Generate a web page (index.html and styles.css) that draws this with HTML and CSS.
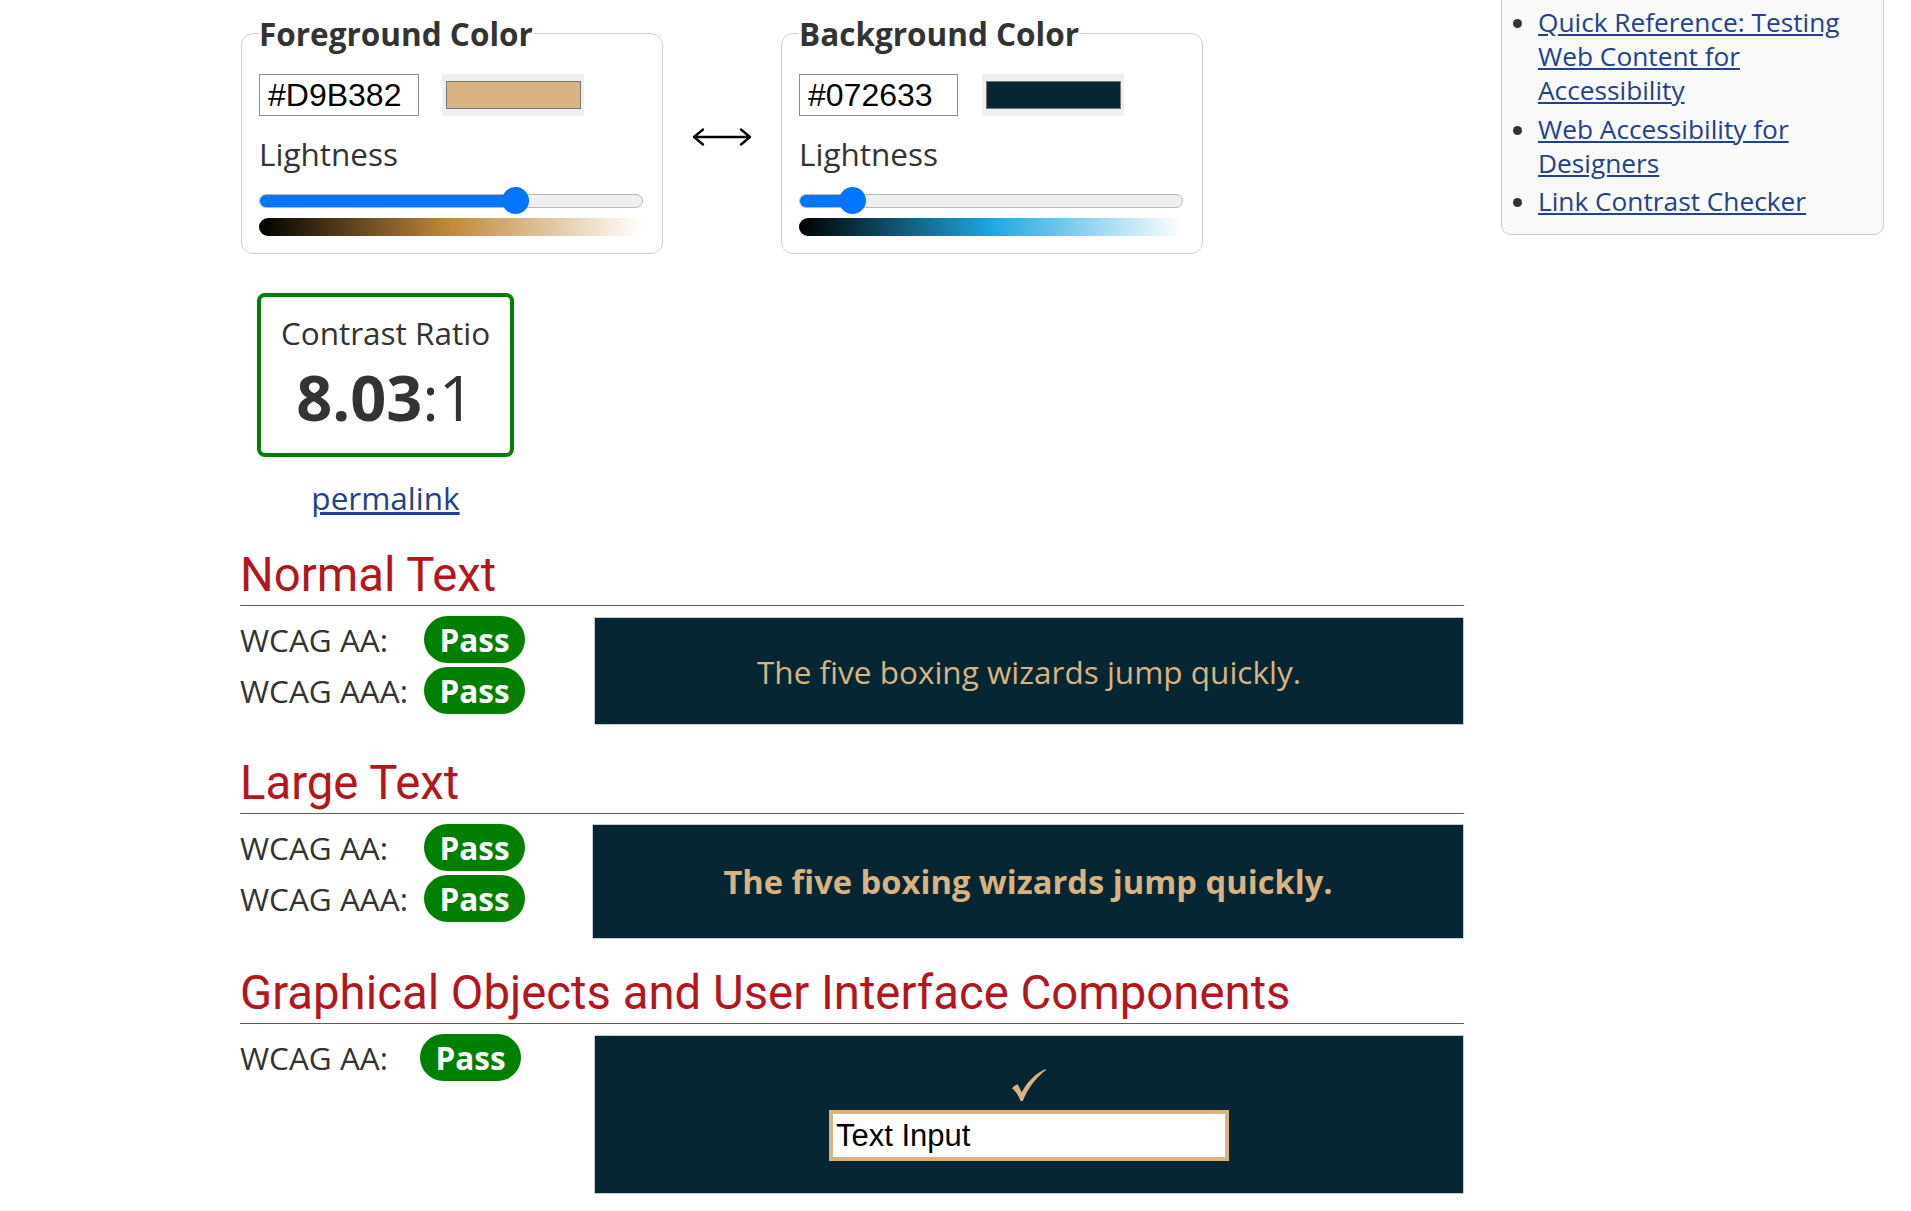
FILE: index.html
```html
<!DOCTYPE html>
<html lang="en">
<head>
<meta charset="utf-8">
<title>Contrast Checker</title>
<link rel="stylesheet" href="styles.css">
</head>
<body>
<div class="page">
  <main class="main">
    <div class="pickers">
      <fieldset class="picker picker-fg">
        <legend>Foreground Color</legend>
        <div class="hexrow">
          <input class="hex" type="text" value="#D9B382" aria-label="Foreground hex">
          <div class="swatch"><span class="chip chip-fg"></span></div>
        </div>
        <div class="label">Lightness</div>
        <div class="slider">
          <div class="track"><div class="fill" style="width:257px"></div></div>
          <div class="thumb" style="left:243px"></div>
        </div>
        <div class="grad grad-fg"></div>
      </fieldset>
      <div class="swap">
        <svg width="60" height="24" viewBox="0 0 60 24" aria-hidden="true">
          <path d="M2 12 H58 M11 4.5 L2 12 L11 19.5 M49 4.5 L58 12 L49 19.5" fill="none" stroke="#000" stroke-width="2.4" stroke-linecap="round" stroke-linejoin="round"/>
        </svg>
      </div>
      <fieldset class="picker picker-bg">
        <legend>Background Color</legend>
        <div class="hexrow">
          <input class="hex hex-bg" type="text" value="#072633" aria-label="Background hex">
          <div class="swatch"><span class="chip chip-bg"></span></div>
        </div>
        <div class="label">Lightness</div>
        <div class="slider">
          <div class="track"><div class="fill" style="width:53px"></div></div>
          <div class="thumb" style="left:39.5px"></div>
        </div>
        <div class="grad grad-bg"></div>
      </fieldset>
    </div>

    <div class="ratio-col">
      <div class="ratio-box">
        <div class="ratio-label">Contrast Ratio</div>
        <div class="ratio-value"><strong>8.03</strong>:1</div>
      </div>
      <a class="permalink" href="#">permalink</a>
    </div>

    <section class="result result-normal">
      <h2>Normal Text</h2>
      <div class="result-body">
        <div class="checks">
          <span class="lbl">WCAG AA:</span><span class="pass">Pass</span>
          <span class="lbl">WCAG AAA:</span><span class="pass">Pass</span>
        </div>
        <div class="sample sample-normal">The five boxing wizards jump quickly.</div>
      </div>
    </section>

    <section class="result result-large">
      <h2>Large Text</h2>
      <div class="result-body">
        <div class="checks checks-large">
          <span class="lbl">WCAG AA:</span><span class="pass">Pass</span>
          <span class="lbl">WCAG AAA:</span><span class="pass">Pass</span>
        </div>
        <div class="sample sample-large">The five boxing wizards jump quickly.</div>
      </div>
    </section>

    <section class="result result-graph">
      <h2>Graphical Objects and User Interface Components</h2>
      <div class="result-body">
        <div class="checks checks-graph">
          <span class="lbl">WCAG AA:</span><span class="pass">Pass</span>
        </div>
        <div class="sample sample-graph">
          <svg class="check" width="34" height="32" viewBox="0 0 34 32" aria-hidden="true">
            <path d="M0 19.5 C1.5 17.5 3.5 15.8 5.5 15.2 C7 17.5 8.5 20.5 9.6 23.5 C15 13 23 5 33.5 0 L34 1 C24 8.5 16 19 10.8 32 L8.6 32 C6.5 26.5 3.8 22 0 19.5 Z" fill="#D9B382"/>
          </svg>
          <input class="demo-input" type="text" value="Text Input" aria-label="Text Input">
        </div>
      </div>
    </section>
  </main>

  <aside class="sidebar">
    <ul>
      <li><a href="#">Quick Reference: Testing Web Content for Accessibility</a></li>
      <li><a href="#">Web Accessibility for Designers</a></li>
      <li><a href="#">Link Contrast Checker</a></li>
    </ul>
  </aside>
</div>
</body>
</html>
```

FILE: styles.css
```css
html, body {
  margin: 0;
  background: #ffffff;
}

body {
  font-family: "Open Sans", "Noto Sans", sans-serif;
  color: #333333;
  overflow: hidden;
}

.page {
  display: flex;
  align-items: flex-start;
  gap: 37px;
  padding-left: 240px;
}

.main {
  width: 1224px;
  flex: none;
  padding-top: 12px;
}

/* ---------- colour pickers ---------- */
.pickers {
  display: flex;
  align-items: stretch;
}

.picker {
  box-sizing: border-box;
  width: 422px;
  min-width: 0;
  margin: 0;
  padding: 19px 19px 17px 17px;
  border: 1px solid #cfcfcf;
  border-radius: 12px;
}

.picker-fg {
  margin-left: 1px;
}

.picker legend {
  padding: 0;
  font-size: 31.5px;
  font-weight: 700;
  line-height: normal;
  color: #333333;
}

.hexrow {
  display: flex;
  gap: 23px;
}

.hex {
  box-sizing: border-box;
  width: 160px;
  height: 42px;
  margin: 0;
  padding: 0 6px 0 8px;
  border: 1px solid #8f8f8f;
  border-radius: 0;
  background: #ffffff;
  color: #000000;
  font-family: "Liberation Sans", Arial, sans-serif;
  font-size: 32px;
}

.hex-bg {
  width: 159px;
  margin-right: 1px;
}

.swatch {
  box-sizing: border-box;
  width: 142px;
  height: 42px;
  padding: 7px 3px 7px 4px;
  background: #efefef;
}

.chip {
  display: block;
  box-sizing: border-box;
  height: 100%;
  border: 1px solid #767676;
}

.chip-fg { background: #D9B382; }
.chip-bg { background: #072633; }

.label {
  margin-top: 16px;
  font-size: 31.5px;
  line-height: normal;
}

.slider {
  position: relative;
  height: 27px;
  margin-top: 12px;
}

.track {
  position: absolute;
  left: 0;
  right: 0;
  top: 6.5px;
  box-sizing: border-box;
  height: 14px;
  border: 1px solid #b8b8b8;
  border-radius: 7px;
  background: #efefef;
  overflow: hidden;
}

.fill {
  height: 100%;
  margin: -1px 0 0 -1px;
  padding-bottom: 2px;
  background: #0075ff;
  border-radius: 7px 0 0 7px;
}

.thumb {
  position: absolute;
  top: 0;
  width: 27px;
  height: 27px;
  border-radius: 50%;
  background: #0075ff;
}

.grad {
  height: 18px;
  margin-top: 4px;
  border-radius: 9px 0 0 9px;
}

.grad-fg {
  background: linear-gradient(to right, #000000, hsl(34, 53%, 50%), #ffffff);
}

.grad-bg {
  background: linear-gradient(to right, #000000, hsl(198, 76%, 50%), #ffffff);
}

.swap {
  width: 118px;
  flex: none;
  display: flex;
  align-items: center;
  justify-content: center;
  padding-top: 8px;
  box-sizing: border-box;
}

/* ---------- contrast ratio ---------- */
.ratio-col {
  width: 257px;
  margin: 39px 0 0 17px;
  display: flex;
  flex-direction: column;
  align-items: center;
}

.ratio-box {
  box-sizing: border-box;
  width: 257px;
  height: 164px;
  padding-top: 14px;
  border: 4px solid #008000;
  border-radius: 8px;
  text-align: center;
}

.ratio-label {
  font-size: 31.5px;
  line-height: normal;
}

.ratio-value {
  margin-top: 6px;
  font-size: 63px;
  line-height: 73px;
}

.ratio-value strong {
  font-weight: 700;
}

.permalink {
  margin-top: 19px;
  font-size: 31.5px;
  line-height: normal;
  color: #22418e;
}

/* ---------- results ---------- */
.result-normal { margin-top: 28px; }
.result-large  { margin-top: 29.5px; }
.result-graph  { margin-top: 26.5px; }

.result h2 {
  margin: 0 0 10px;
  padding-bottom: 1px;
  font-family: Roboto, "Open Sans", sans-serif;
  font-weight: 400;
  font-size: 47.3px;
  line-height: 57px;
  color: #b5161e;
  border-bottom: 1px solid #a53a3c;
}

.result-body {
  display: flex;
  align-items: flex-start;
}

.checks {
  width: 354px;
  flex: none;
  display: grid;
  grid-template-columns: 184px auto;
  row-gap: 4px;
  align-items: center;
  justify-items: start;
}

.checks-large { width: 352px; }
.checks-graph { grid-template-columns: 180px auto; }

.lbl {
  font-size: 31.5px;
  line-height: 47px;
}

.pass {
  padding: 0 15.5px;
  border-radius: 24px;
  background: #008000;
  color: #ffffff;
  font-weight: 700;
  font-size: 31.5px;
  line-height: 47px;
}

.sample {
  flex: 1;
  min-width: 0;
  margin-top: 1px;
  background: #072633;
  color: #D9B382;
  border: 1px solid #c5ccd2;
  text-align: center;
}

.sample-normal {
  padding: 31.5px 20px;
  font-size: 31.5px;
  line-height: normal;
}

.sample-large {
  margin-top: 0;
  padding: 34px 20px;
  font-size: 32.7px;
  font-weight: 700;
  line-height: normal;
}

.sample-graph {
  display: flex;
  flex-direction: column;
  align-items: center;
  padding: 33px 0 32px;
}

.check {
  display: block;
}

.demo-input {
  box-sizing: border-box;
  width: 400px;
  height: 51px;
  margin: 9px 0 0;
  padding: 0 3px;
  border: 4px solid #D9B382;
  border-radius: 0;
  background: #ffffff;
  color: #000000;
  font-family: "Liberation Sans", Arial, sans-serif;
  font-size: 31px;
}

/* ---------- sidebar ---------- */
.sidebar {
  width: 383px;
  flex: none;
  box-sizing: border-box;
  margin-top: -12px;
  background: #f9f9fa;
  border: 1px solid #cacaca;
  border-radius: 10px;
}

.sidebar ul {
  margin: 0;
  padding: 16px 20px 16px 36px;
}

.sidebar li {
  margin-bottom: 4.5px;
  font-size: 26.25px;
  line-height: 34px;
}

.sidebar li:last-child {
  margin-bottom: 0;
}

.sidebar a {
  color: #22418e;
}
```
